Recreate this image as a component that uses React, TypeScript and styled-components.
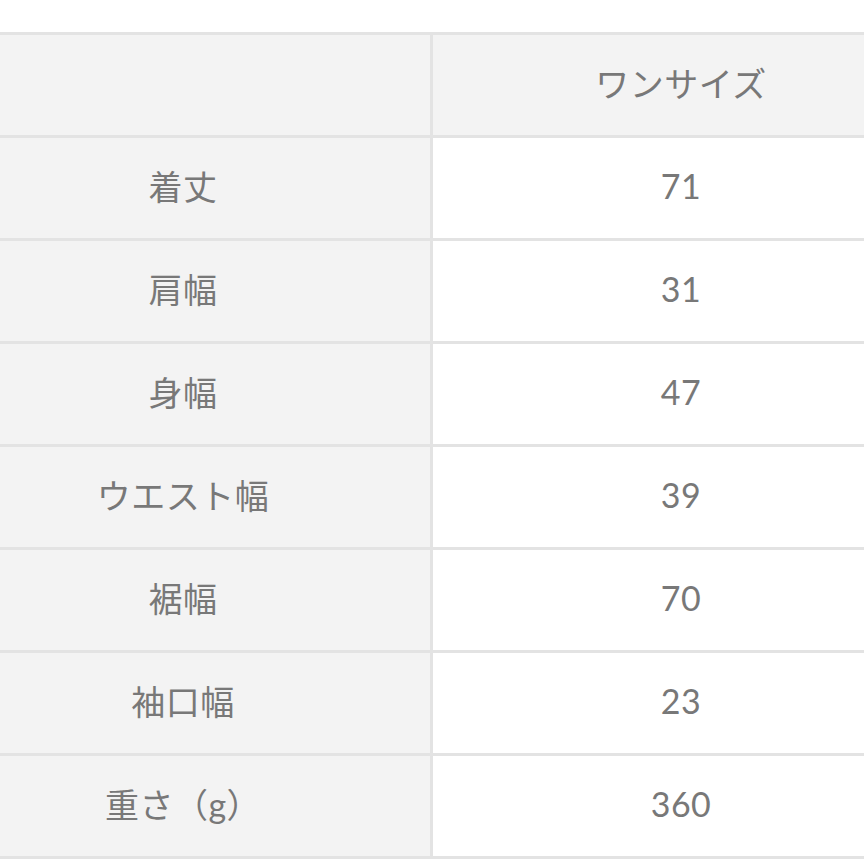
import React from 'react';
import styled, { createGlobalStyle } from 'styled-components';

const GlobalStyle = createGlobalStyle`
  html, body {
    margin: 0;
    padding: 0;
    background: #ffffff;
    overflow: hidden;
  }
`;

const Page = styled.div`
  padding-top: 32px;
  width: 864px;
  overflow: hidden;
`;

const Table = styled.div`
  display: grid;
  grid-template-columns: 494px 496px;
  grid-auto-rows: 100px;
  gap: 3px;
  width: 993px;
  margin-left: -64px;
  background: #e3e3e3;
  border-top: 3px solid #e3e3e3;
  border-bottom: 3px solid #e3e3e3;
`;

const Cell = styled.div<{ $shaded: boolean }>`
  display: flex;
  align-items: center;
  justify-content: center;
  padding-bottom: 5px;
  background: ${p => (p.$shaded ? '#f3f3f3' : '#ffffff')};
  color: #787878;
  font-family: Lato, 'Noto Sans CJK JP', sans-serif;
  font-size: 34px;
  letter-spacing: 0.5px;
`;

const rows: [string, string][] = [
  ['着丈', '71'],
  ['肩幅', '31'],
  ['身幅', '47'],
  ['ウエスト幅', '39'],
  ['裾幅', '70'],
  ['袖口幅', '23'],
  ['重さ（g）', '360'],
];

const App: React.FC = () => {
  return (
    <Page>
      <GlobalStyle />
      <Table>
        <Cell $shaded />
        <Cell $shaded>ワンサイズ</Cell>
        {rows.map(([label, value]) => (
          <React.Fragment key={label}>
            <Cell $shaded>{label}</Cell>
            <Cell $shaded={false}>{value}</Cell>
          </React.Fragment>
        ))}
      </Table>
    </Page>
  );
};

export default App;
